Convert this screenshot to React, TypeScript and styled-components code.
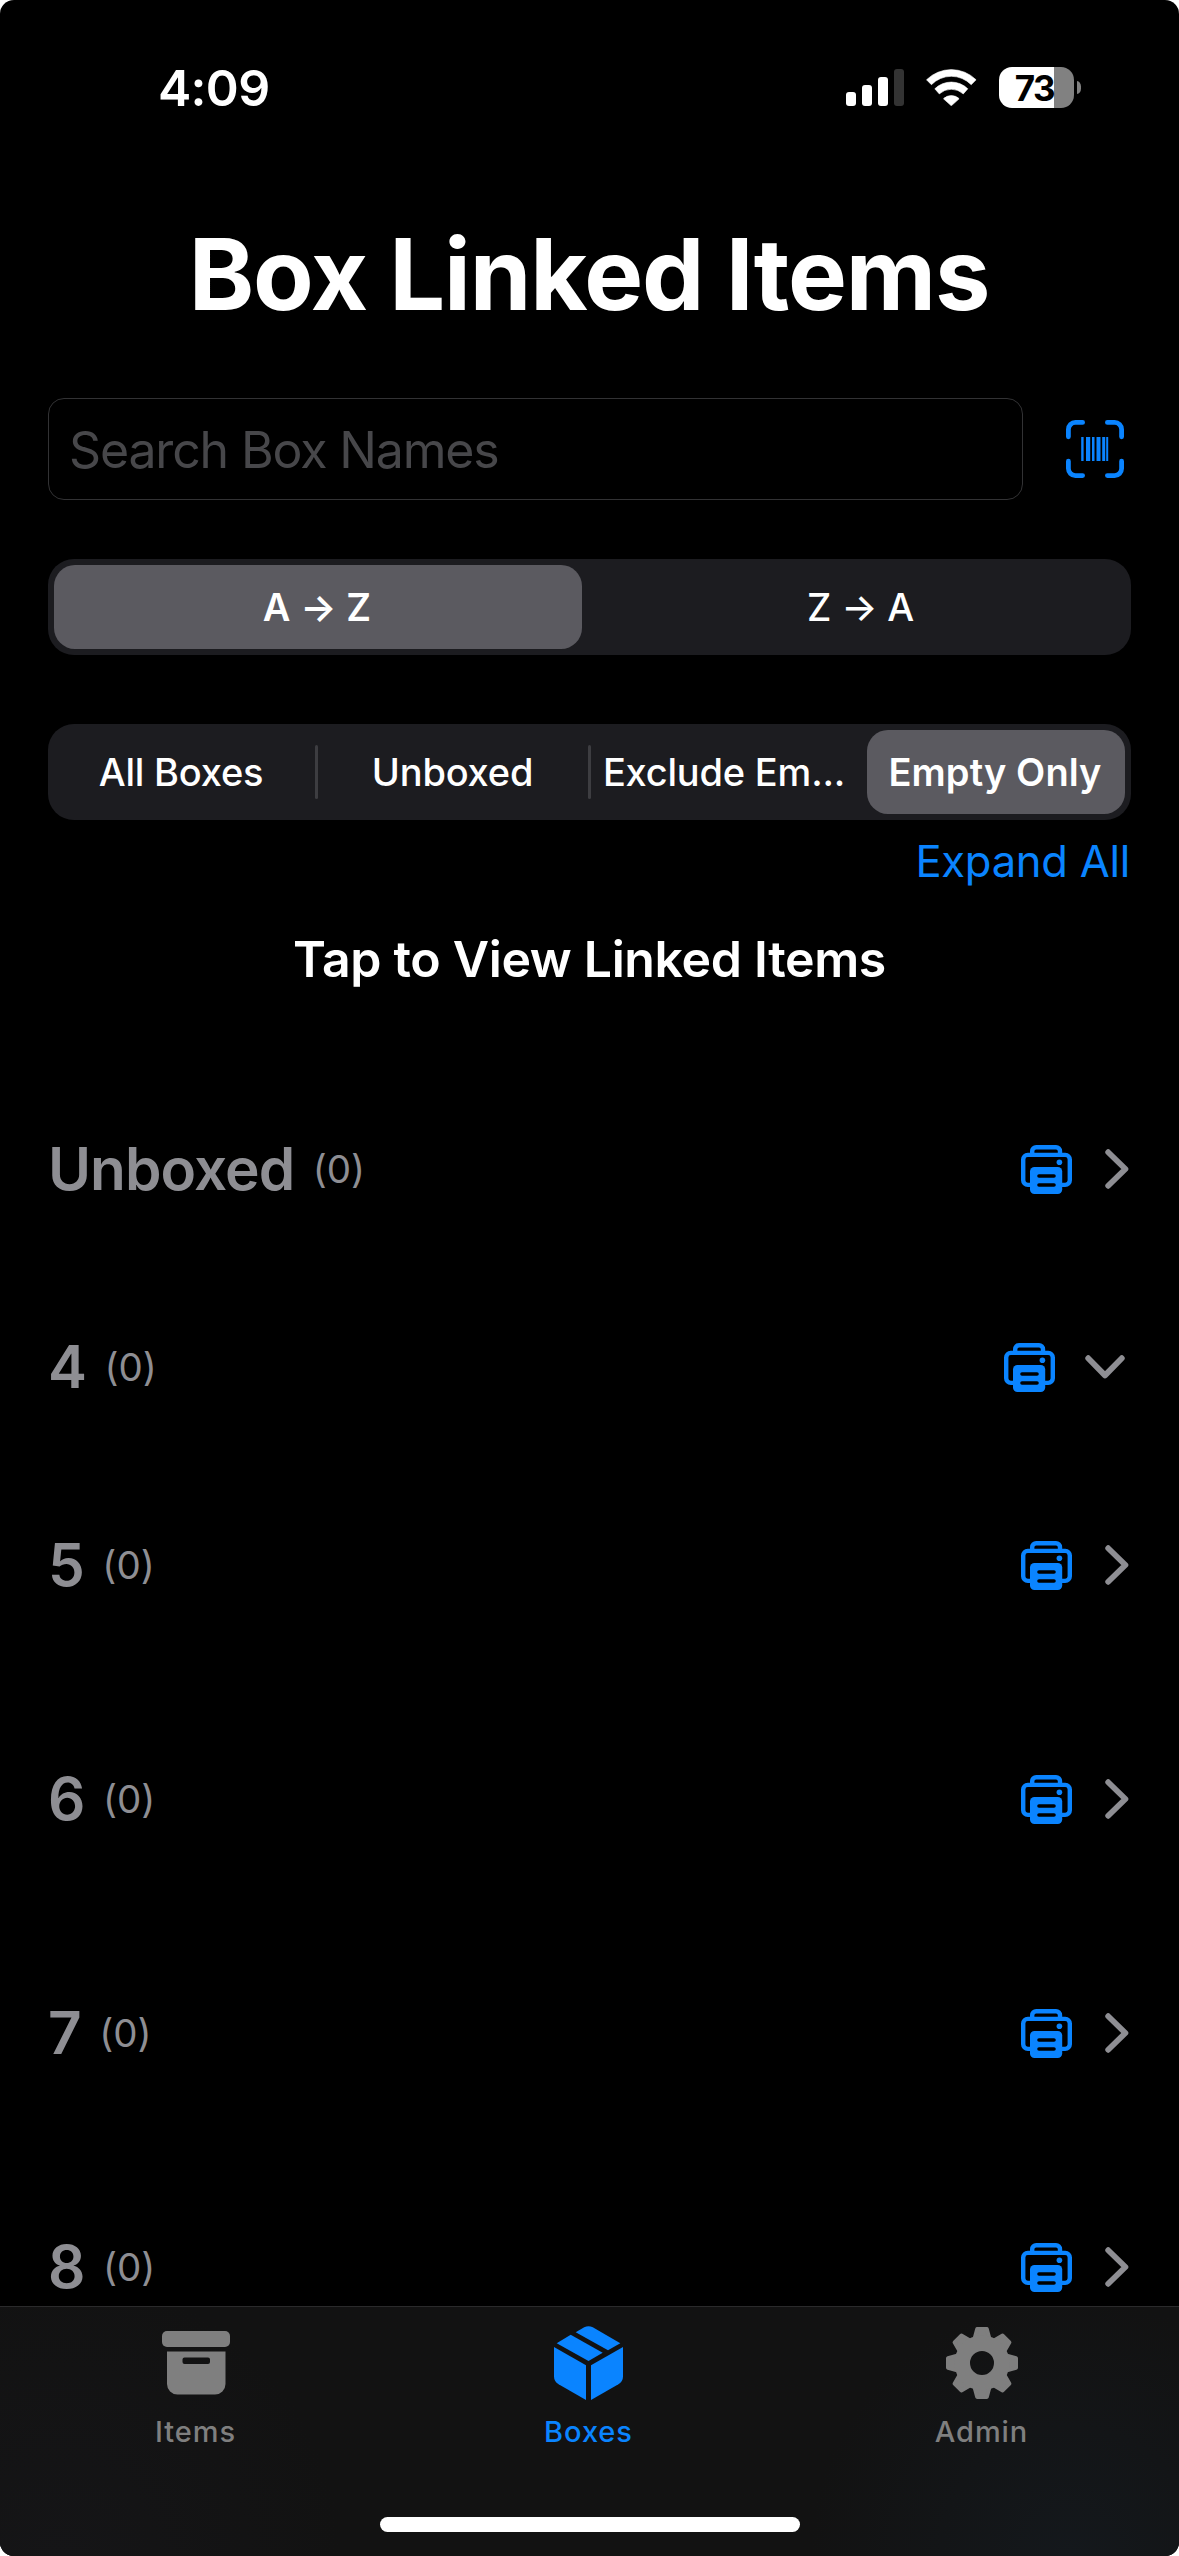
import React from "react";
import styled, { createGlobalStyle, css } from "styled-components";

const BLUE = "#0a84ff";
const GRAY = "#8e8e93";
const TAB_GRAY = "#7f7f7f";

const GlobalStyle = createGlobalStyle`
  *, *::before, *::after { box-sizing: border-box; }
  html, body { margin: 0; padding: 0; background: #fff; }
  button { border: 0; padding: 0; margin: 0; background: none; font: inherit; color: inherit; }
  svg { display: block; flex: none; }
`;

const Screen = styled.div`
  width: 1179px;
  height: 2556px;
  display: flex;
  flex-direction: column;
  overflow: hidden;
  border-radius: 14px;
  background: #000;
  color: #fff;
  font-family: Inter, "Liberation Sans", sans-serif;
`;

const Content = styled.main`
  flex: 1;
  min-height: 0;
  overflow: hidden;
`;

const StatusBar = styled.header`
  height: 176px;
  display: flex;
  align-items: center;
  justify-content: space-between;
  padding: 0 98px 0 158px;
`;

const Clock = styled.span`
  font-size: 50px;
  font-weight: 600;
  letter-spacing: -0.7px;
`;

const StatusIcons = styled.div`
  display: flex;
  align-items: center;
  margin-bottom: 1px;
`;

const WifiSlot = styled.div`
  margin: 0 22px;
`;

const Battery = styled.div`
  width: 75px;
  height: 41px;
  display: flex;
  align-items: center;
  justify-content: center;
  padding-right: 4px;
  border-radius: 13px;
  background: linear-gradient(to right, #fff 55px, #818181 55px);
  color: #000;
  font-size: 35px;
  font-weight: 700;
  letter-spacing: -1.5px;
`;

const BatteryNub = styled.div`
  width: 4px;
  height: 13px;
  margin-left: 3px;
  border-radius: 0 5px 5px 0 / 0 7px 7px 0;
  background: #818181;
`;

const Title = styled.h1`
  margin: 0;
  height: 196px;
  line-height: 196px;
  padding-right: 1px;
  text-align: center;
  font-size: 99px;
  font-weight: 700;
  letter-spacing: -1.15px;
  white-space: nowrap;
`;

const SearchRow = styled.div`
  display: flex;
  align-items: center;
  justify-content: space-between;
  margin-top: 26px;
  padding: 0 55px 0 48px;
`;

const SearchField = styled.div`
  width: 975px;
  height: 102px;
  display: flex;
  align-items: center;
  padding: 2px 20px 0;
  border: 1px solid #323234;
  border-radius: 16px;
  color: #47474a;
  font-size: 50px;
  letter-spacing: -1.15px;
`;

const Segmented = styled.div<{ $columns: string; $top: number }>`
  display: grid;
  grid-template-columns: ${(p) => p.$columns};
  height: 96px;
  margin: ${(p) => p.$top}px 48px 0;
  padding: 6px;
  border-radius: 26px;
  background: #1c1c20;
`;

const Segment = styled.button<{ $selected?: boolean; $divider?: boolean; $left?: number; $right?: number }>`
  display: flex;
  align-items: center;
  justify-content: center;
  padding-left: ${(p) => p.$left ?? 0}px;
  padding-right: ${(p) => p.$right ?? 0}px;
  border-radius: 21px;
  font-size: 38px;
  font-weight: 450;
  letter-spacing: -0.2px;
  white-space: nowrap;
  color: #fff;
  ${(p) =>
    p.$selected &&
    css`
      background: #5b5a60;
      font-weight: 580;
      letter-spacing: 0.1px;
    `}
  ${(p) =>
    p.$divider &&
    css`
      position: relative;
      &::after {
        content: "";
        position: absolute;
        right: 0;
        top: 15px;
        width: 3px;
        height: 54px;
        border-radius: 2px;
        background: #3d3d41;
      }
    `}
`;

const ExpandRow = styled.div`
  height: 83px;
  display: flex;
  align-items: center;
  justify-content: flex-end;
  padding: 0 49px 2px 0;
`;

const ExpandButton = styled.button`
  color: ${BLUE};
  font-size: 43.5px;
  letter-spacing: -0.25px;
`;

const Hint = styled.h2`
  margin: 0;
  height: 112px;
  line-height: 112px;
  text-align: center;
  font-size: 50px;
  font-weight: 600;
  letter-spacing: -0.35px;
`;

const List = styled.ul`
  list-style: none;
  margin: 0;
  padding: 55px 50px 0 48px;
`;

const Row = styled.li<{ $spaced: boolean }>`
  height: 198px;
  display: flex;
  align-items: center;
  margin-top: ${(p) => (p.$spaced ? 36 : 0)}px;
  color: ${GRAY};
`;

const BoxName = styled.span`
  padding-bottom: 1px;
  font-size: 58.5px;
  font-weight: 600;
  letter-spacing: -0.95px;
`;

const Count = styled.span`
  flex: 1;
  margin-left: 18.5px;
  font-size: 38.5px;
  font-feature-settings: "calt" 0;
`;

const Chevron = styled.div<{ $open?: boolean }>`
  margin-left: ${(p) => (p.$open ? 30 : 33)}px;
  margin-right: ${(p) => (p.$open ? 4 : 0)}px;
`;

const TabBar = styled.nav`
  height: 250px;
  display: flex;
  flex-direction: column;
  align-items: center;
  border-top: 1px solid #2a2a2b;
  background:
    radial-gradient(circle at 1070px 250px, #14181c 0, rgba(20, 24, 28, 0) 260px),
    radial-gradient(circle at 60px 250px, #151517 0, rgba(21, 21, 23, 0) 280px),
    #121212;
`;

const Tabs = styled.div`
  width: 100%;
  height: 210px;
  display: grid;
  grid-template-columns: repeat(3, 393px);
`;

const Tab = styled.button<{ $active?: boolean }>`
  display: flex;
  flex-direction: column;
  align-items: center;
  padding-right: 2px;
  color: ${(p) => (p.$active ? BLUE : TAB_GRAY)};
  font-size: 29px;
  font-weight: 500;
  letter-spacing: 0.95px;
`;

const TabIcon = styled.div`
  height: 112px;
  display: flex;
  align-items: center;
`;

const TabLabel = styled.span`
  line-height: 26px;
`;

const HomeIndicator = styled.div`
  width: 420px;
  height: 15px;
  border-radius: 8px;
  background: #fff;
`;

const SignalIcon = () => (
  <svg width="58" height="37" viewBox="0 0 58 37" fill="#fff">
    <rect x="0" y="23" width="10" height="14" rx="3" />
    <rect x="16" y="16" width="10" height="21" rx="3" />
    <rect x="32" y="8" width="10" height="29" rx="3" />
    <rect x="48" y="0" width="10" height="37" rx="3" fill="#333" />
  </svg>
);

const WifiIcon = () => (
  <svg width="51" height="37" viewBox="0 0 51 37" fill="#fff" stroke="#fff" strokeWidth="0.6" strokeLinejoin="round">
    <path d="M0.5 10.8A35.3 35.3 0 0 1 50.1 10.8L45.2 15.7A27.8 27.8 0 0 0 5.4 15.7Z" />
    <path d="M8.8 19.8A23.6 23.6 0 0 1 41.8 19.8L37.3 24.9A17.7 17.7 0 0 0 13.3 24.9Z" />
    <path d="M17.5 29.8A11 11 0 0 1 33.1 29.8L25.3 36.8Z" />
  </svg>
);

const BarcodeIcon = () => (
  <svg width="58" height="58" viewBox="0 0 58 58" fill="none">
    <g stroke={BLUE} strokeWidth="4.8" strokeLinecap="round">
      <path d="M2.4 16.8V9.4a7 7 0 0 1 7-7h7.2" />
      <path d="M55.6 16.8V9.4a7 7 0 0 0-7-7h-7.2" />
      <path d="M2.4 41.2v7.4a7 7 0 0 0 7 7h7.2" />
      <path d="M55.6 41.2v7.4a7 7 0 0 1-7 7h-7.2" />
    </g>
    <g fill={BLUE}>
      <rect x="15.2" y="17" width="2.4" height="24" />
      <rect x="20" y="17" width="4.2" height="24" />
      <rect x="26" y="17" width="2.5" height="24" />
      <rect x="30.5" y="17" width="4" height="24" />
      <rect x="36.2" y="17" width="3" height="24" />
      <rect x="40.2" y="17" width="2" height="24" />
    </g>
  </svg>
);

const PrinterIcon = () => (
  <svg width="51" height="49" viewBox="0 0 51 49" fill="none">
    <rect x="2.2" y="9.9" width="46.6" height="30" rx="4.6" stroke={BLUE} strokeWidth="4.4" />
    <path d="M11.2 9V6.200a4 4 0 0 1 4-4H35a4 4 0 0 1 4 4v3" stroke={BLUE} strokeWidth="4.400" />
    <rect x="9" y="22" width="32.2" height="27" rx="4.5" fill={BLUE} />
    <path d="M18 31h15M18 40h15" stroke="#000" strokeWidth="3.6" strokeLinecap="round" />
    <circle cx="38.4" cy="17.3" r="2.8" fill={BLUE} />
  </svg>
);

const ChevronRight = () => (
  <svg width="24" height="40" viewBox="0 0 24 40" fill="none" stroke={GRAY} strokeWidth="5.8" strokeLinecap="round" strokeLinejoin="round">
    <path d="M3.2 3.2L20.4 20L3.2 36.8" />
  </svg>
);

const ChevronDown = () => (
  <svg width="40" height="24" viewBox="0 0 40 24" fill="none" stroke={GRAY} strokeWidth="5.8" strokeLinecap="round" strokeLinejoin="round">
    <path d="M3.2 3.2L20 20.4L36.8 3.2" />
  </svg>
);

const ArchiveIcon = () => (
  <svg width="68" height="64" viewBox="0 0 68 64" fill={TAB_GRAY}>
    <rect x="0" y="0" width="68" height="16" rx="5" />
    <path
      fillRule="evenodd"
      d="M5 20.5H63.5V53a10.5 10.5 0 0 1-10.5 10.5H15.500A10.500 10.500 0 0 1 5 53ZM22.500 26.500a2 2 0 0 0-2 2v2.500a2 2 0 0 0 2 2h23.500a2 2 0 0 0 2-2v-2.500a2 2 0 0 0-2-2Z"
    />
  </svg>
);

const CubeIcon = () => (
  <svg width="69" height="74" viewBox="0 0 69 74" fill={BLUE}>
    <path d="M0 20.900L32 39.200V74L4.600 58.300Q0 55.500 0 50.500Z" />
    <path d="M69 20.900L37 39.200V74L64.400 58.300Q69 55.500 69 50.500Z" />
    <path d="M2.700 17.300L16.700 8.800L48.700 26.800L34.500 35.100Z" />
    <path d="M21.700 6.200L30.200 1.300Q34.500-1 38.800 1.300L66.300 17.300L54 24.300Z" />
  </svg>
);

const GearIcon = () => (
  <svg width="72" height="72" viewBox="-36 -36 72 72">
    <g fill={TAB_GRAY} stroke={TAB_GRAY} strokeWidth="4" strokeLinejoin="round">
      {[0, 45, 90, 135, 180, 225, 270, 315].map((angle) => (
        <path key={angle} transform={`rotate(${angle})`} d="M-7.500 -24L-4.800 -34H4.800L7.500 -24Z" />
      ))}
    </g>
    <circle r="19.700" fill="none" stroke={TAB_GRAY} strokeWidth="15.400" />
  </svg>
);

const boxes = [
  { name: "Unboxed", count: 0 },
  { name: "4", count: 0, open: true },
  { name: "5", count: 0 },
  { name: "6", count: 0, spaced: true },
  { name: "7", count: 0, spaced: true },
  { name: "8", count: 0, spaced: true },
];

export default function App() {
  return (
    <>
      <GlobalStyle />
      <Screen>
        <Content>
          <StatusBar>
            <Clock>4:09</Clock>
            <StatusIcons>
              <SignalIcon />
              <WifiSlot>
                <WifiIcon />
              </WifiSlot>
              <Battery>73</Battery>
              <BatteryNub />
            </StatusIcons>
          </StatusBar>
          <Title>Box Linked Items</Title>
          <SearchRow>
            <SearchField>Search Box Names</SearchField>
            <BarcodeIcon />
          </SearchRow>
          <Segmented $columns="528px 1fr" $top={59}>
            <Segment $selected $right={2}>A → Z</Segment>
            <Segment $left={14}>Z → A</Segment>
          </Segmented>
          <Segmented $columns="264px 273px 276px 258px" $top={69}>
            <Segment $divider $right={10}>All Boxes</Segment>
            <Segment $divider $right={4}>Unboxed</Segment>
            <Segment $right={10}>Exclude Em...</Segment>
            <Segment $selected $right={2}>Empty Only</Segment>
          </Segmented>
          <ExpandRow>
            <ExpandButton>Expand All</ExpandButton>
          </ExpandRow>
          <Hint>Tap to View Linked Items</Hint>
          <List>
            {boxes.map((box) => (
              <Row key={box.name} $spaced={!!box.spaced}>
                <BoxName>{box.name}</BoxName>
                <Count>({box.count})</Count>
                <PrinterIcon />
                <Chevron $open={box.open}>{box.open ? <ChevronDown /> : <ChevronRight />}</Chevron>
              </Row>
            ))}
          </List>
        </Content>
        <TabBar>
          <Tabs>
            <Tab>
              <TabIcon>
                <ArchiveIcon />
              </TabIcon>
              <TabLabel>Items</TabLabel>
            </Tab>
            <Tab $active>
              <TabIcon>
                <CubeIcon />
              </TabIcon>
              <TabLabel>Boxes</TabLabel>
            </Tab>
            <Tab>
              <TabIcon>
                <GearIcon />
              </TabIcon>
              <TabLabel>Admin</TabLabel>
            </Tab>
          </Tabs>
          <HomeIndicator />
        </TabBar>
      </Screen>
    </>
  );
}
